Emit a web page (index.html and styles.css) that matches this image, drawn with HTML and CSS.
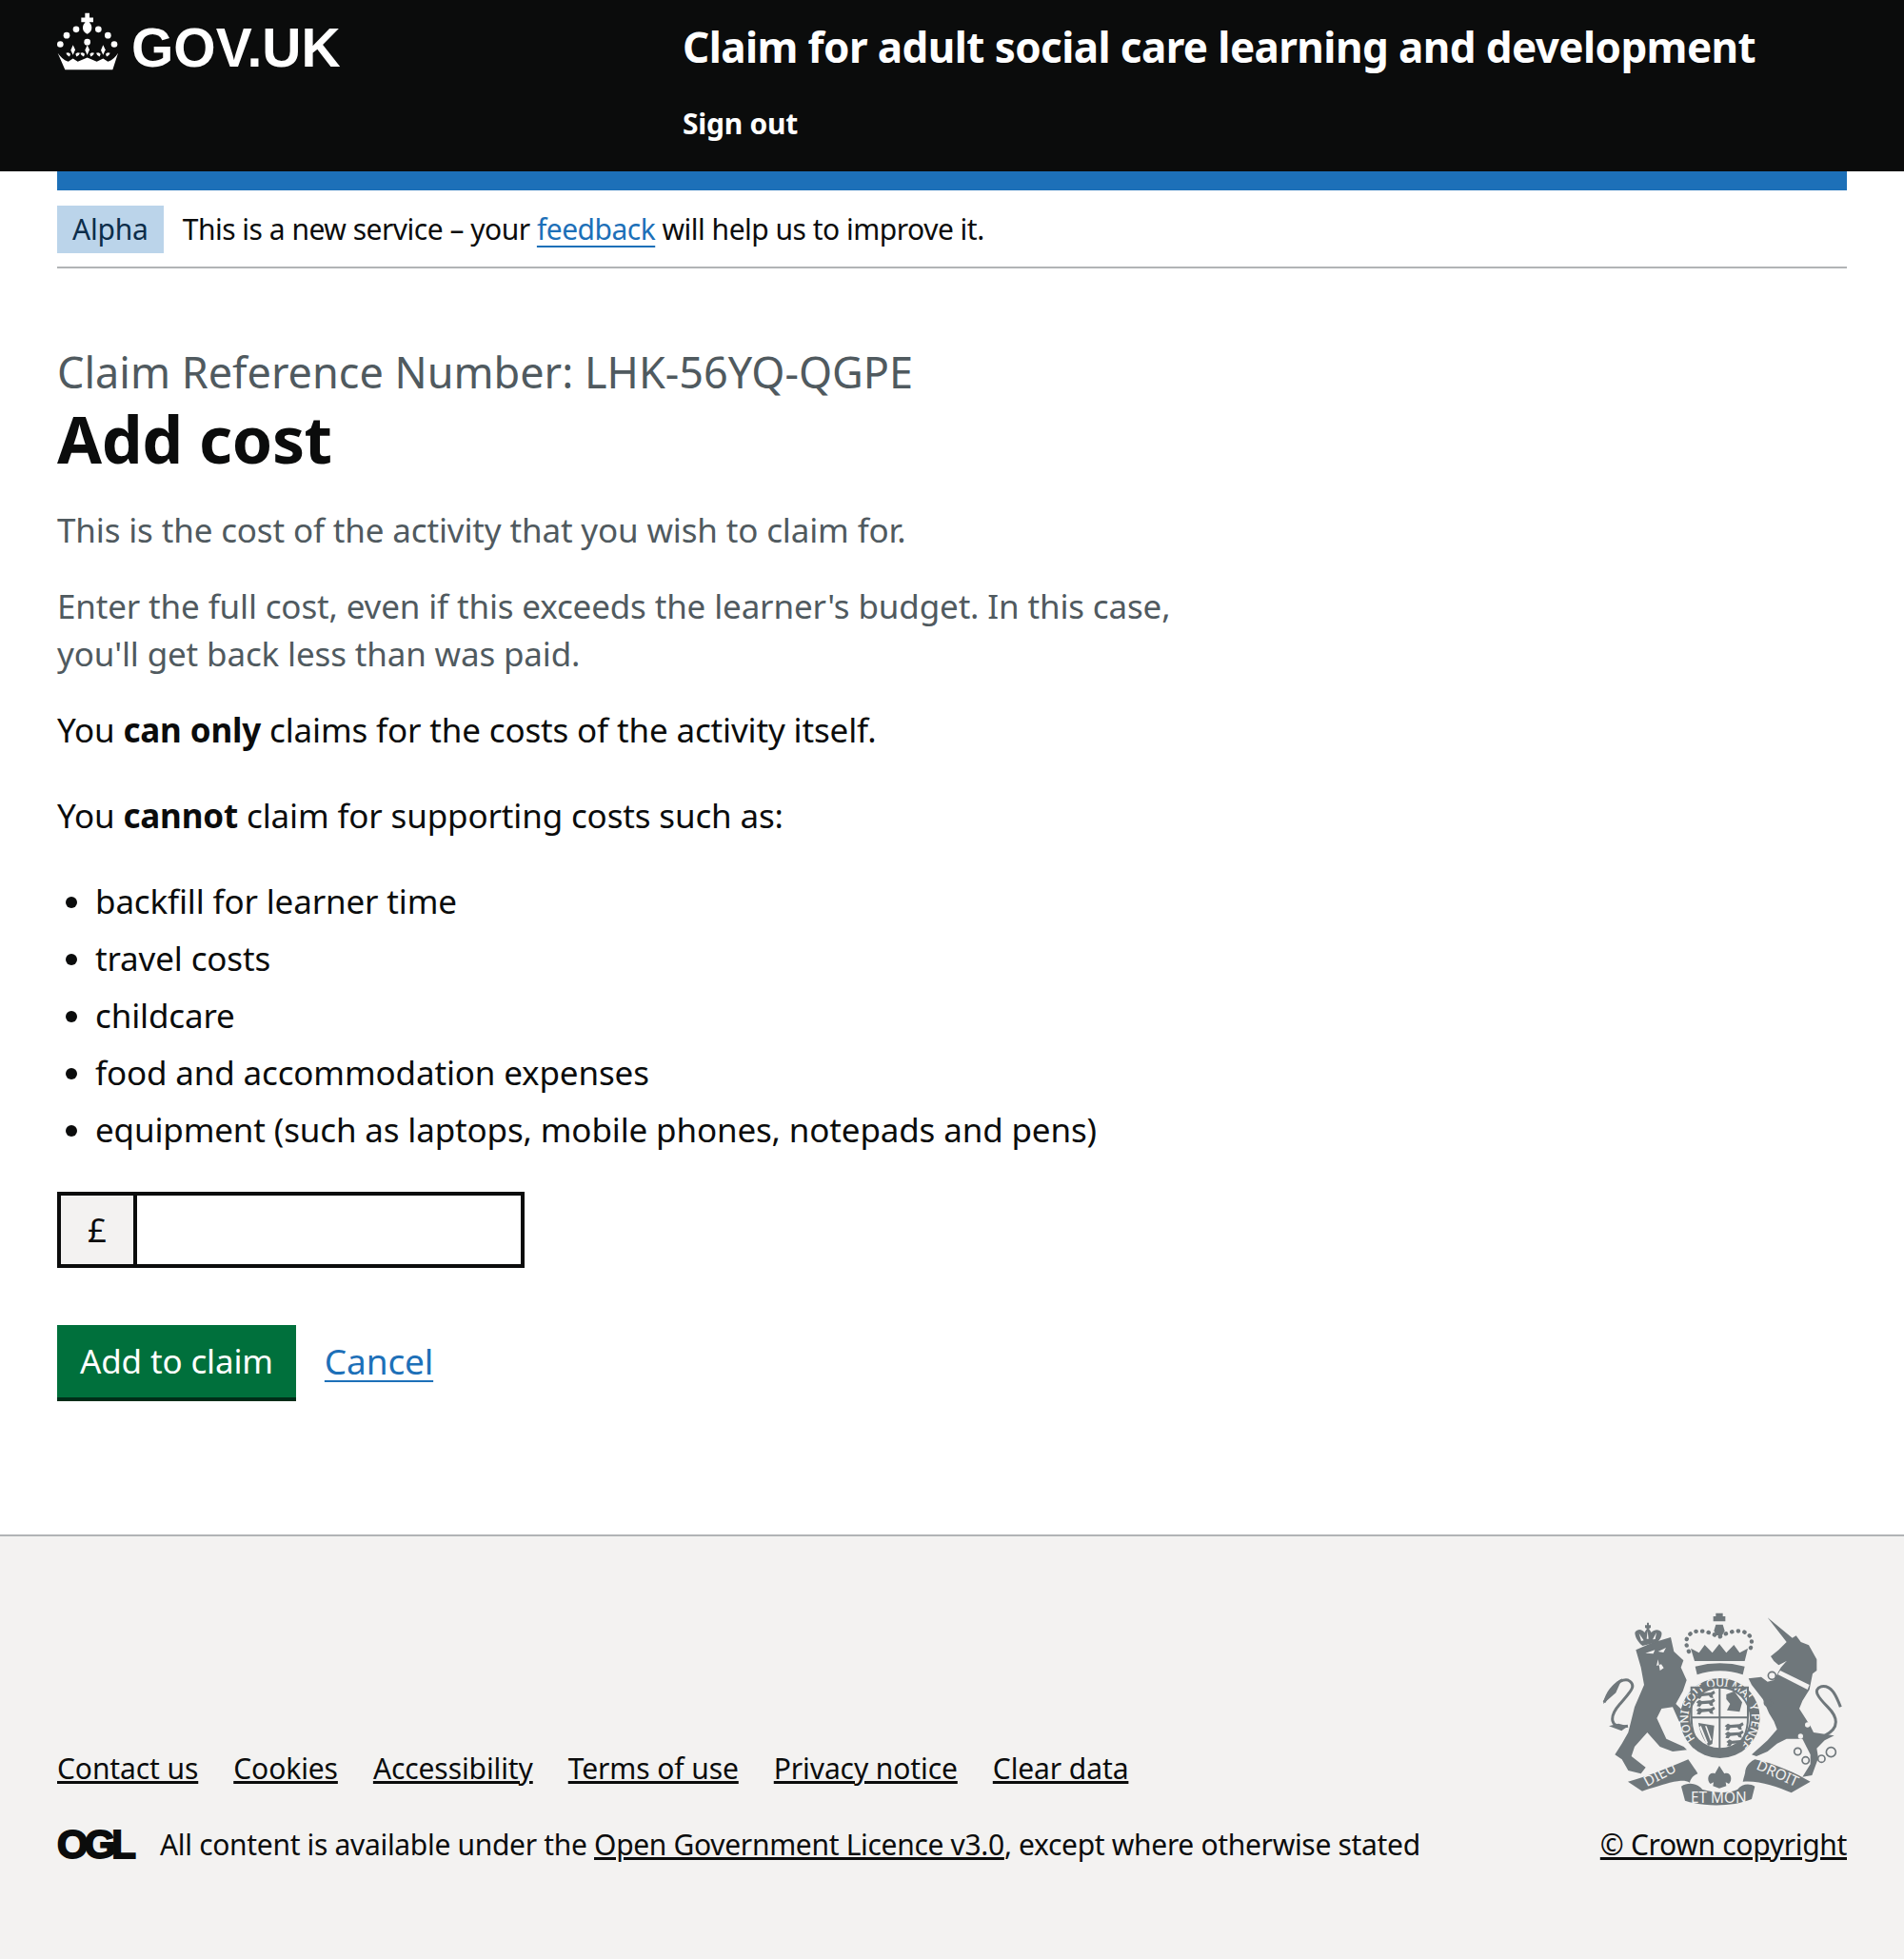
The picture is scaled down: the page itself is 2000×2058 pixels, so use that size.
FILE: index.html
```html
<!DOCTYPE html>
<html lang="en">
<head>
  <meta charset="UTF-8">
  <title>Add cost - Claim for adult social care learning and development</title>
  <link rel="stylesheet" href="styles.css">
</head>
<body>
  <header class="site-header">
    <a class="logo" href="#">
      <svg class="crown" viewBox="60 40 195 182" aria-hidden="true">
        <path d="M148 42h14v14h12v14h-12v2c12 12 8 30-7 36-15-6-19-24-7-36v-2h-12v-14h12z"/>
        <circle cx="120" cy="93" r="10"/><circle cx="190" cy="93" r="10"/>
        <circle cx="90" cy="112" r="10"/><circle cx="220" cy="112" r="10"/>
        <circle cx="70" cy="140" r="10"/><circle cx="240" cy="140" r="10"/>
        <circle cx="155" cy="133" r="10"/>
        <path d="M62 168c8 12 18 22 33 27l15-10 15 10 30-13 30 13 20-10 15 10c15-5 25-15 32-27l-17 52H85z"/>
        <g id="fleur">
          <path d="M110 142l7 15-7 17-7-15z"/>
          <path d="M88 168q9-5 14 3l-3 8q-8-2-11-11zM132 168q-9-5-14 3l3 8q8-2 11-11z"/>
        </g>
        <use href="#fleur" x="45"/>
        <use href="#fleur" x="95"/>
      </svg>
      <span class="logo-text">GOV.UK</span>
    </a>
    <div class="header-content">
      <a class="service-name" href="#">Claim for adult social care learning and development</a>
      <nav class="header-nav"><a href="#">Sign out</a></nav>
    </div>
  </header>

  <div class="container">
    <div class="blue-bar"></div>
    <div class="phase-banner">
      <strong class="tag">Alpha</strong>
      <span>This is a new service – your <a class="link" href="#">feedback</a> will help us to improve it.</span>
    </div>

    <main class="main">
      <span class="caption">Claim Reference Number: LHK-56YQ-QGPE</span>
      <h1 class="title">Add cost</h1>
      <p class="hint">This is the cost of the activity that you wish to claim for.</p>
      <p class="hint">Enter the full cost, even if this exceeds the learner's budget. In this case, you'll get back less than was paid.</p>
      <p class="body-text">You <b>can only</b> claims for the costs of the activity itself.</p>
      <p class="body-text">You <b>cannot</b> claim for supporting costs such as:</p>
      <ul class="bullets">
        <li>backfill for learner time</li>
        <li>travel costs</li>
        <li>childcare</li>
        <li>food and accommodation expenses</li>
        <li>equipment (such as laptops, mobile phones, notepads and pens)</li>
      </ul>
      <div class="input-wrap">
        <div class="prefix">£</div>
        <input class="cost-input" type="text" aria-label="Cost">
      </div>
      <div class="actions">
        <button class="button" type="submit">Add to claim</button>
        <a class="link cancel" href="#">Cancel</a>
      </div>
    </main>
  </div>

  <footer class="footer">
    <div class="footer-meta">
      <div class="footer-left">
        <ul class="footer-links">
          <li><a href="#">Contact us</a></li>
          <li><a href="#">Cookies</a></li>
          <li><a href="#">Accessibility</a></li>
          <li><a href="#">Terms of use</a></li>
          <li><a href="#">Privacy notice</a></li>
          <li><a href="#">Clear data</a></li>
        </ul>
        <div class="licence">
          <span class="ogl">OGL</span>
          <span>All content is available under the <a href="#">Open Government Licence v3.0</a>, except where otherwise stated</span>
        </div>
      </div>
      <div class="footer-right">
        <svg class="arms" viewBox="0 0 900 720" aria-hidden="true">
          <defs>
            <path id="beast" d="M0 0l10-8 8 4 28-2 10-6 4 8-8 6 2 10-10-2-4-6-22 2-6 8-10-2 4-8z"/>
          </defs>
          <!-- lion -->
          <path d="M175 160l50-22 60-18 10 45 30 28-8 22 18 40-12 35-22 40 40 40-5 25-25-10-20-45-35 5-15 30 30 65 55 25 10 10-45 5-40-15-40-45-40 45-10 30 45 35-15 20-40-10-20-35-22-15 22-35 20-35 20-80 30-70-10-55z"/>
          <path class="cut" d="M205 170l30-10-5 12zM245 165l25-12-8 15zM245 190l-5 20 15-5 8 12-12 8z"/>
          <path class="line" d="M150 400c-60 10-60-30-25-70 35-40 55-60 25-75-30-5-50 25-75 70" stroke-width="9"/>
          <path d="M72 330c5-35 30-65 60-80l-20 45zM90 400l40 15 20-15-30-8z"/>
          <!-- lion crown -->
          <path d="M172 105c10-15 25-8 30 0l8-12-6-3v-8h6v-8h6v8h6v8l-6 3 8 12c8-10 25-12 32 0 2 12-5 22-12 30l-48 12c-12-10-24-25-24-42z"/>
          <path class="cut" d="M185 108l15 22-8 2zM212 100l3 25h-6zM240 105l-12 22 8-1z"/>
          <!-- unicorn -->
          <path d="M590 58l78 64 12-7 15 20 25 10 25 45v35l-13 10-10 50-22 35-10 25 35 55 10 20 35 5 30 5-30 15-25 25 5 30-20 55-30 5 25-40v-30l-25-50h-50l-30 15-30 25-35 15-15-5 50-45 30-35-10-25-15-25-20-45-35-45-10-20 40-5 20 15 20-5 22-40 18-20-25 13-15-13-10-15 25-20 25-25z"/>
          <path class="cut" d="M630 225l92 45-6 15-94-48z"/>
          <circle class="cut" cx="725" cy="350" r="10"/><circle class="cut" cx="716" cy="396" r="8"/><circle class="cut" cx="694" cy="432" r="8"/>
          <path class="line" d="M770 430c50-25 40-60 10-90-30-30-50-55-20-65 30-5 45 25 60 65" stroke-width="9"/>
          <g class="ring"><circle cx="604" cy="241" r="12"/><circle cx="592" cy="326" r="12"/><circle cx="685" cy="480" r="11"/><circle cx="710" cy="508" r="11"/><circle cx="760" cy="503" r="11"/><circle cx="790" cy="482" r="15"/></g>
          <!-- royal crown -->
          <path d="M427 44h22v10h-6v8h-10v-8h-6zM419 54h38v16h-38zM427 80h22l6 20-8 14h-18l-8-14z"/>
          <path d="M360 195h158l10-40-26 14-18-25-24 25-22-28-22 28-24-25-18 25-26-14z"/>
          <path d="M362 212q78-20 156 0l-6 26q-72-25-144 0z"/>
          <path class="dots" d="M342 165c-30-60 30-85 95-45 65-40 125-15 95 45" stroke-width="13"/>
          <!-- shield and garter -->
          <circle class="garter" cx="440" cy="375" r="126"/>
          <circle class="cut" cx="440" cy="375" r="94"/>
          <path id="garter-path" class="none" d="M440 475a100 100 0 1 1 0-200a100 100 0 1 1 0 200"/>
          <text class="garter-text"><textPath href="#garter-path" startOffset="87" textLength="475" lengthAdjust="spacing">HONI SOIT QUI MAL Y PENSE</textPath></text>
          <path class="shield" d="M350 278h178v95q0 70-50 105-20 10-39 10-25 0-45-12-44-35-44-103zM439 278v210M350 373h178"/>
          <g class="beasts">
            <use href="#beast" x="365" y="300"/><use href="#beast" x="365" y="325"/><use href="#beast" x="365" y="350"/>
            <use href="#beast" x="455" y="400"/><use href="#beast" x="455" y="425"/><use href="#beast" x="460" y="450"/>
          </g>
          <path d="M460 300l25-10 25 35-8 30-40-5 10-20-12-15z"/>
          <path d="M372 390l50 8-6 58-12 6c-18-20-28-45-32-72z"/>
          <path class="cut" d="M380 398l22 55-5 3-22-52zM398 400l16 44-4 2-17-46z"/>
          <!-- motto -->
          <path d="M150 575c60-15 130-45 190-70 10 15 25 35 30 45-15 5-25 20-25 28-25-13-55-3-150 27z"/>
          <path d="M318 590c22-15 52-10 67 10 45 12 85 12 110 0 15-20 40-20 55-10l-10 40c-60 25-150 25-210 5z"/>
          <path d="M520 540c5-20 20-30 30-35 70 15 130 45 175 70l-60 35c-45-20-105-40-153-35 3-15 8-25 8-35z"/>
          <path d="M438 525l-14 25c-20-8-28 20-14 32l10-5-2 12 20 7 22-7-2-12 10 5c14-12 6-40-14-32z"/>
          <text class="motto" transform="translate(210 592) rotate(-28)">DIEU</text>
          <text class="motto" x="348" y="643">ET MON</text>
          <text class="motto" transform="translate(552 535) rotate(24)">DROIT</text>
        </svg>
        <a class="copyright" href="#">© Crown copyright</a>
      </div>
    </div>
  </footer>
</body>
</html>
```

FILE: styles.css
```css
body {
  margin: 0;
  font-family: "Noto Sans", sans-serif;
  font-size: 35px;
  line-height: 50px;
  letter-spacing: -0.15px;
  color: #0b0c0c;
  background: #fff;
}

a {
  color: inherit;
}

/* header */
.site-header {
  display: flex;
  height: 180px;
  box-sizing: border-box;
  padding: 0 60px;
  background: #0b0c0c;
  color: #fff;
}

.site-header a {
  color: #fff;
  text-decoration: none;
}

.logo {
  display: flex;
  align-items: flex-start;
  width: 657px;
  padding-top: 13px;
}

.crown {
  width: 65px;
  height: 61px;
  fill: #fff;
}

.logo-text {
  margin-left: 13px;
  font-family: "Liberation Sans", sans-serif;
  font-weight: 700;
  font-size: 57px;
  line-height: 74px;
  letter-spacing: 0;
}

.header-content {
  padding-top: 19px;
}

.service-name {
  display: block;
  font-weight: 700;
  font-size: 44px;
  line-height: 60px;
  letter-spacing: -0.6px;
}

.header-nav {
  margin-top: 31px;
  font-weight: 700;
  font-size: 30px;
  line-height: 40px;
  letter-spacing: -0.25px;
}

/* page */
.container {
  margin: 0 60px;
}

.blue-bar {
  height: 20px;
  background: #1d70b8;
}

.phase-banner {
  display: flex;
  align-items: center;
  gap: 20px;
  padding: 16px 0 14px;
  border-bottom: 2px solid #b1b4b6;
  font-size: 30px;
  letter-spacing: -0.5px;
}

.tag {
  padding: 0 16px;
  background: #bbd4ea;
  color: #0c2d4a;
  font-weight: 400;
  letter-spacing: -0.2px;
}

.link {
  color: #1d70b8;
  text-underline-offset: 6px;
  text-decoration-thickness: 2px;
}

.main {
  padding-top: 79px;
  padding-bottom: 140px;
}

.caption {
  display: block;
  color: #505a5f;
  font-size: 45px;
  line-height: 60px;
  letter-spacing: 0;
}

.title {
  margin: 0 0 31px;
  font-size: 68px;
  line-height: 80px;
  font-weight: 700;
  letter-spacing: -0.4px;
}

.hint {
  max-width: 1200px;
  margin: 0 0 30px;
  color: #505a5f;
}

.body-text {
  margin: 0 0 40px;
}

.bullets {
  margin: 0 0 40px;
  padding: 0 0 0 40px;
}

.bullets li {
  margin-bottom: 10px;
}

.input-wrap {
  display: flex;
  width: 491px;
  height: 80px;
  margin-bottom: 60px;
}

.prefix {
  width: 84px;
  box-sizing: border-box;
  border: 4px solid #0b0c0c;
  background: #f3f2f1;
  text-align: center;
  line-height: 72px;
}

.cost-input {
  flex: 1;
  min-width: 0;
  box-sizing: border-box;
  margin-left: -4px;
  border: 4px solid #0b0c0c;
  border-radius: 0;
  outline: 0;
}

.actions {
  display: flex;
  align-items: center;
  gap: 30px;
}

.button {
  height: 76px;
  margin-bottom: 4px;
  padding: 0 24px;
  border: 0;
  border-radius: 0;
  background: #00703c;
  box-shadow: 0 4px 0 #002d18;
  color: #fff;
  font: inherit;
  letter-spacing: inherit;
}

.cancel {
  margin-bottom: 4px;
  font-size: 37px;
}

/* footer */
.footer {
  height: 447px;
  box-sizing: border-box;
  padding: 66px 60px 0;
  border-top: 2px solid #b1b4b6;
  background: #f3f2f1;
  font-size: 30px;
  letter-spacing: -0.32px;
}

.footer-meta {
  display: flex;
  justify-content: space-between;
  align-items: flex-end;
}

.footer-links {
  display: flex;
  gap: 37px;
  margin: 0 0 30px;
  padding: 0;
  list-style: none;
  letter-spacing: -0.1px;
}

.licence {
  display: flex;
  align-items: center;
  gap: 29px;
}

.ogl {
  font-family: "Liberation Sans", sans-serif;
  font-weight: 700;
  font-size: 42px;
  letter-spacing: -4px;
  -webkit-text-stroke: 2px #0b0c0c;
}

.footer-right {
  display: flex;
  flex-direction: column;
  align-items: flex-end;
}

.arms {
  width: 300px;
  height: 240px;
  margin-right: -20px;
  margin-bottom: -7px;
  fill: #6f777b;
}

.arms .cut {
  fill: #f3f2f1;
}

.arms .none {
  fill: none;
}

.arms .line {
  fill: none;
  stroke: #6f777b;
}

.arms .dots {
  fill: none;
  stroke: #6f777b;
  stroke-linecap: round;
  stroke-dasharray: 1 19;
}

.arms .ring circle {
  fill: none;
  stroke: #6f777b;
  stroke-width: 5;
}

.arms .shield {
  fill: none;
  stroke: #6f777b;
  stroke-width: 6;
}

.arms .garter-text {
  fill: #f3f2f1;
  font-family: "Noto Sans", sans-serif;
  font-size: 36px;
  font-weight: 500;
  letter-spacing: 0;
}

.arms .motto {
  fill: #f3f2f1;
  font-family: "Noto Sans", sans-serif;
  font-size: 46px;
  letter-spacing: 0;
}
```
